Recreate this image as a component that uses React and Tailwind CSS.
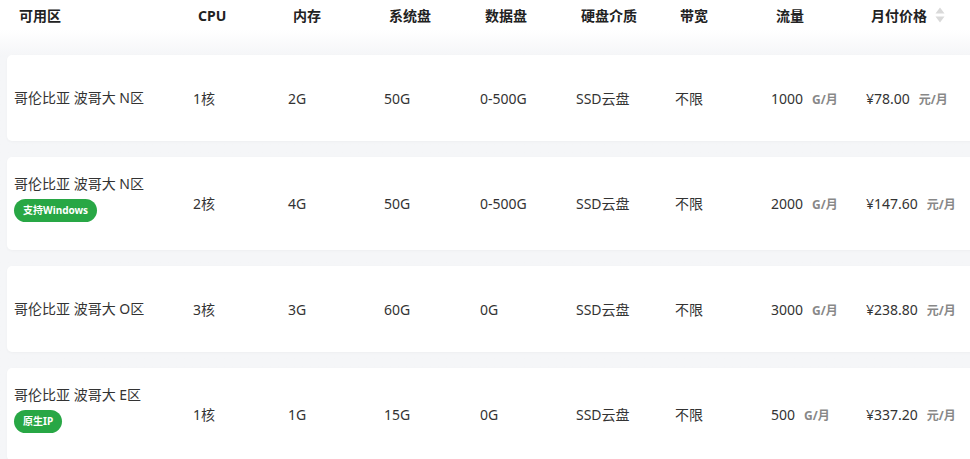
import React from 'react';

const ROWS = [
  { zone: '哥伦比亚 波哥大 N区', cpu: '1核', mem: '2G', sys: '50G', data: '0-500G', disk: 'SSD云盘', bw: '不限', flow: '1000', price: '¥78.00' },
  { zone: '哥伦比亚 波哥大 N区', tag: '支持Windows', cpu: '2核', mem: '4G', sys: '50G', data: '0-500G', disk: 'SSD云盘', bw: '不限', flow: '2000', price: '¥147.60' },
  { zone: '哥伦比亚 波哥大 O区', cpu: '3核', mem: '3G', sys: '60G', data: '0G', disk: 'SSD云盘', bw: '不限', flow: '3000', price: '¥238.80' },
  { zone: '哥伦比亚 波哥大 E区', tag: '原生IP', cpu: '1核', mem: '1G', sys: '15G', data: '0G', disk: 'SSD云盘', bw: '不限', flow: '500', price: '¥337.20' }
];

const COLS = 'grid grid-cols-[179px_95px_96px_96px_96px_99px_96px_95px_1fr]';

function SortIcon() {
  return (
    <svg width="10" height="16" viewBox="0 0 10 16" className="ml-[8px]">
      <path d="M5 0.5 L9.5 6.5 L0.5 6.5 Z" fill="#d9d9d9" />
      <path d="M5 15.5 L9.5 9.5 L0.5 9.5 Z" fill="#d9d9d9" />
    </svg>
  );
}

export default function App() {
  return (
    <div
      className="w-[970px] h-[459px] overflow-hidden bg-white text-[14px] text-[#333]"
      style={{ fontFamily: '"Noto Sans", "Noto Sans CJK SC", sans-serif' }}
    >
      <div className={COLS + ' h-[30px] items-center pl-[19px] font-bold text-[#222]'}>
        <div>可用区</div>
        <div>CPU</div>
        <div>内存</div>
        <div>系统盘</div>
        <div>数据盘</div>
        <div>硬盘介质</div>
        <div>带宽</div>
        <div>流量</div>
        <div className="flex items-center">
          月付价格
          <SortIcon />
        </div>
      </div>

      <div className="bg-gradient-to-b from-white from-[0px] to-[#f5f6f8] to-[25px] pt-[25px] flex flex-col gap-[16px] pl-[7px]">
        {ROWS.map((r, i) => (
          <div
            key={i}
            className={
              COLS +
              ' w-[990px] min-h-[86px] items-center bg-white rounded-[5px] pl-[7px] shadow-[0_1px_3px_rgba(0,0,0,0.03)]'
            }
          >
            <div className={r.tag ? 'pt-[17px] pb-[28px]' : ''}>
              <div className="leading-[20px]">{r.zone}</div>
              {r.tag ? (
                <span className="inline-flex items-center h-[23px] mt-[5px] px-[9px] rounded-full bg-[#28a745] text-white text-[10px] font-bold">
                  {r.tag}
                </span>
              ) : null}
            </div>
            <div>{r.cpu}</div>
            <div>{r.mem}</div>
            <div>{r.sys}</div>
            <div>{r.data}</div>
            <div>{r.disk}</div>
            <div>{r.bw}</div>
            <div className="flex items-baseline">
              {r.flow}
              <span className="ml-[9px] text-[12px] font-bold text-[#888]">G/月</span>
            </div>
            <div className="flex items-baseline">
              {r.price}
              <span className="ml-[9px] text-[12px] font-bold text-[#888]">元/月</span>
            </div>
          </div>
        ))}
      </div>
    </div>
  );
}
